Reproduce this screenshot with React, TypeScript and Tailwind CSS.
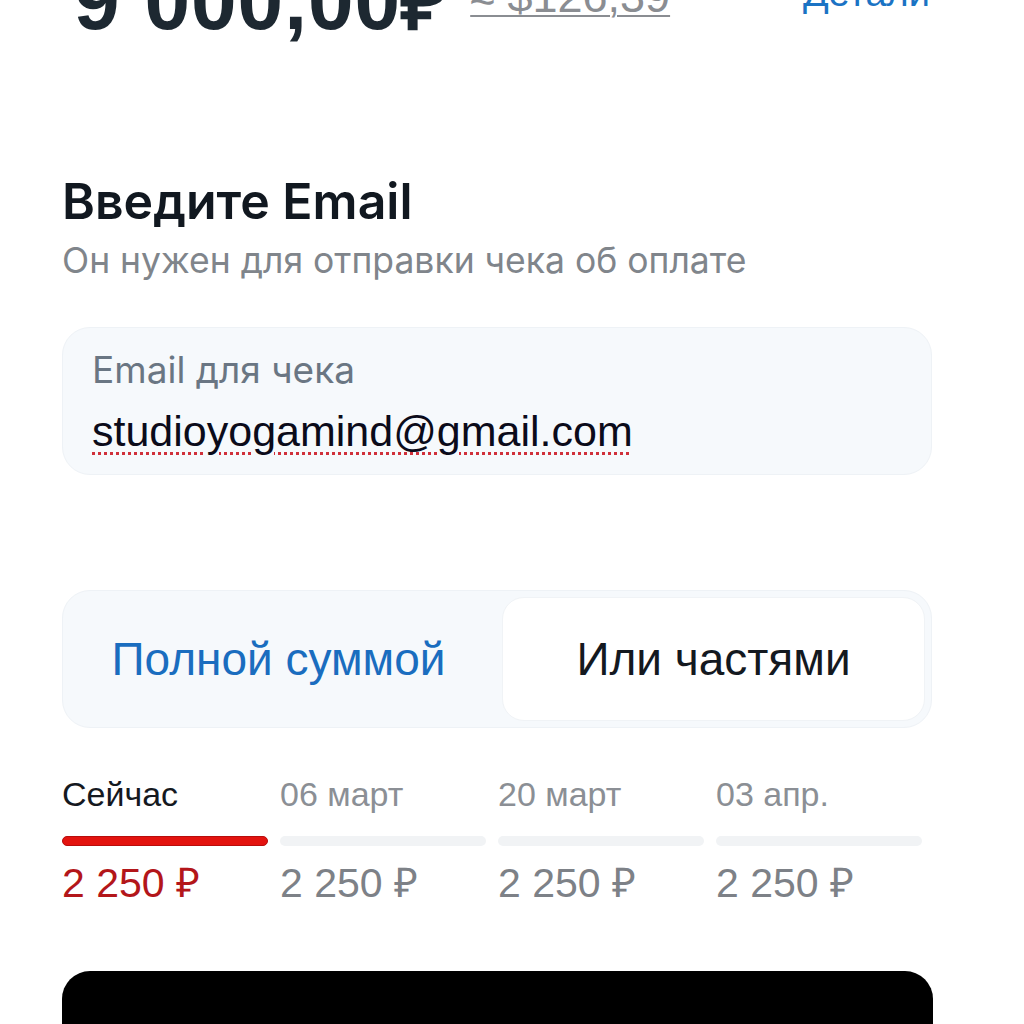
import React from "react";

const sans = { fontFamily: '"Liberation Sans", Arial, sans-serif' };
const inter = { fontFamily: 'Inter, "Noto Sans", sans-serif' };

const steps = [
  { label: "Сейчас", amount: "2 250 ₽", active: true },
  { label: "06 март", amount: "2 250 ₽", active: false },
  { label: "20 март", amount: "2 250 ₽", active: false },
  { label: "03 апр.", amount: "2 250 ₽", active: false },
];

export default function App() {
  return (
    <div className="w-[1024px] h-[1024px] overflow-hidden bg-white">
      <div className="pl-[62px] pr-[92px]">
        {/* price row */}
        <div className="flex items-start h-[70px] mt-[-34px]">
          <span
            className="text-[82px] leading-[70px] font-bold text-[#1d2831] ml-[12px] tracking-[1px]"
            style={sans}
          >
            9 000,00₽
          </span>
          <span
            className="ml-[20px] mt-[1px] text-[45px] leading-[60px] text-[#8a8d92] underline underline-offset-[3px] decoration-[2px]"
            style={sans}
          >
            ≈ $126,39
          </span>
          <span
            className="ml-auto mr-[2px] mt-[-3px] text-[38px] leading-[60px] text-[#1b73c4]"
            style={sans}
          >
            Детали
          </span>
        </div>

        {/* heading */}
        <h1
          className="mt-[139px] text-[50px] leading-[52px] font-semibold text-[#111820]"
          style={inter}
        >
          Введите Email
        </h1>
        <p
          className="mt-[14px] text-[35.5px] leading-[40px] text-[#80858b]"
          style={inter}
        >
          Он нужен для отправки чека об оплате
        </p>

        {/* email input */}
        <div className="mt-[46px] h-[148px] rounded-[28px] bg-[#f6f9fc] border border-[#eef2f6] px-[29px] pt-[20px]">
          <div
            className="text-[37px] leading-[44px] text-[#6a7683]"
            style={inter}
          >
            Email для чека
          </div>
          <div
            className="mt-[13px] text-[43px] leading-[52px] text-[#0b0b1a] underline decoration-dotted decoration-[#d0303a] decoration-[3px] underline-offset-[6px]"
            style={sans}
          >
            studioyogamind@gmail.com
          </div>
        </div>

        {/* tabs */}
        <div className="mt-[115px] h-[138px] rounded-[28px] bg-[#f6f9fc] border border-[#eef2f6] flex p-[6px]">
          <div className="flex-1 flex items-center justify-center pr-[14px]">
            <span
              className="text-[46px] leading-[56px] text-[#1a6dbf]"
              style={sans}
            >
              Полной суммой
            </span>
          </div>
          <div className="w-[423px] flex items-center justify-center bg-white rounded-[22px] border border-[#f0f3f6]">
            <span
              className="text-[46px] leading-[56px] text-[#14191f]"
              style={sans}
            >
              Или частями
            </span>
          </div>
        </div>

        {/* installments */}
        <div className="mt-[44px] grid grid-cols-4 gap-x-[12px] w-[860px]">
          {steps.map((s, i) => (
            <div key={i} className="flex flex-col">
              <div
                className={
                  "text-[34px] leading-[44px] " +
                  (s.active ? "text-[#15191f]" : "text-[#8b8f95]")
                }
                style={sans}
              >
                {s.label}
              </div>
              <div
                className={
                  "mt-[20px] h-[10px] rounded-full " +
                  (s.active
                    ? "bg-[#e3130f] border border-[#b80d0d]"
                    : "bg-[#f1f3f5]")
                }
              />
              <div
                className={
                  "mt-[12px] text-[41px] leading-[50px] " +
                  (s.active ? "text-[#b3161a]" : "text-[#7d8187]")
                }
                style={sans}
              >
                {s.amount}
              </div>
            </div>
          ))}
        </div>

        {/* black button */}
        <div className="mt-[63px] h-[120px] rounded-[28px] bg-black w-[871px]" />
      </div>
    </div>
  );
}
